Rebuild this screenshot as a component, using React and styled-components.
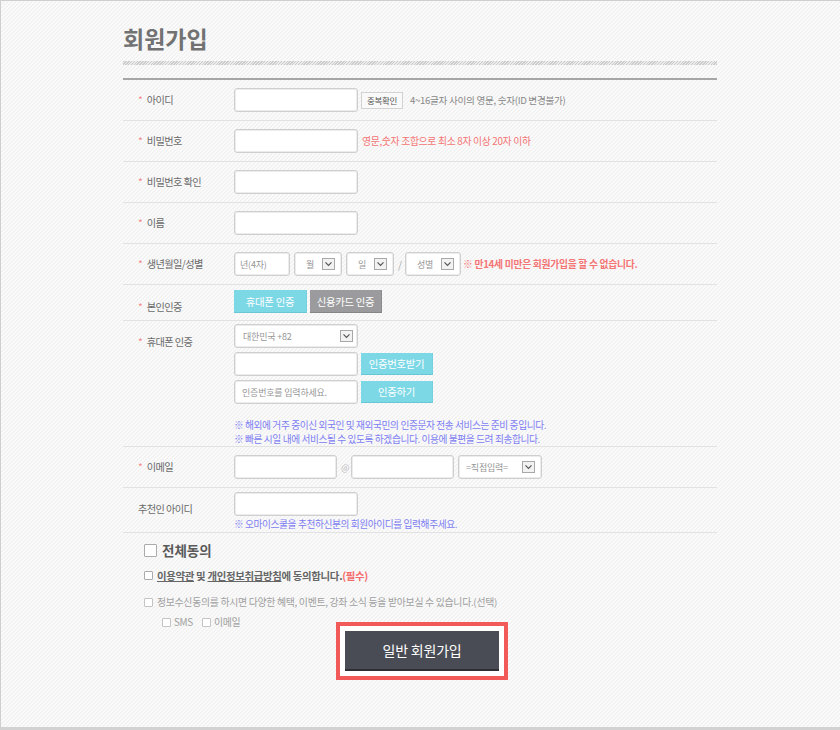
import React from "react";
import styled, { createGlobalStyle } from "styled-components";

const GlobalStyle = createGlobalStyle`
  body {
    margin: 0;
    font-family: "Noto Sans CJK KR", "Noto Sans", sans-serif;
  }
  * {
    box-sizing: border-box;
  }
`;

const Page = styled.div`
  width: 840px;
  height: 730px;
  border-top: 1px solid #cfcfcf;
  border-left: 1px solid #cfcfcf;
  border-bottom: 3px solid #d2d2d2;
  background-color: #f6f6f6;
  background-image: linear-gradient(
    135deg,
    #fbfbfb 25%,
    #f2f2f2 25%,
    #f2f2f2 50%,
    #fbfbfb 50%,
    #fbfbfb 75%,
    #f2f2f2 75%
  );
  background-size: 4px 4px;
  padding-left: 122px;
  overflow: hidden;
`;

const Wrap = styled.div`
  width: 594px;
`;

const Title = styled.h1`
  margin: 26px 0 0;
  font-size: 23px;
  line-height: 22px;
  font-weight: 700;
  color: #727272;
`;

const Hatch = styled.div`
  margin-top: 12px;
  height: 4px;
  background: repeating-linear-gradient(135deg, #cccccc 0 1px, #ebebeb 1px 2px);
`;

const Rule = styled.div`
  margin-top: 13px;
  height: 2px;
  background: #a6a6a6;
`;

const Row = styled.div`
  display: flex;
  align-items: flex-start;
  padding: ${(p) => p.$pad || "8px 0"};
  border-bottom: 1px solid #e2e2e2;
`;

const Label = styled.div`
  width: 111px;
  flex: none;
  padding: ${(p) => p.$top || 0}px 0 0 15px;
  margin-bottom: -${(p) => p.$top || 0}px;
  font-size: 10.2px;
  letter-spacing: -0.6px;
  line-height: 24px;
  color: #6a6a6a;
  white-space: nowrap;
`;

const Star = styled.span`
  color: #f28b8b;
  margin-right: 4px;
  letter-spacing: 0;
`;

const Field = styled.div`
  display: flex;
  flex-direction: column;
  gap: ${(p) => p.$gap ?? 4}px;
`;

const Line = styled.div`
  display: flex;
  align-items: center;
  gap: ${(p) => p.$gap ?? 4}px;
`;

const TextInput = styled.input`
  width: ${(p) => p.$w || 124}px;
  height: 24px;
  margin: 0;
  padding: 0 0 0 ${(p) => p.$pl ?? 7}px;
  border: 1px solid #cfcfcf;
  box-shadow: inset 0 0 0 1px #ececec;
  border-radius: 3px;
  background: #fff;
  font-family: "Noto Sans CJK KR", sans-serif;
  font-size: 9px;
  letter-spacing: -0.2px;
  color: #555;
  outline: none;
  &::placeholder {
    color: #959595;
  }
`;

const SelectBox = styled.div`
  width: ${(p) => p.$w}px;
  height: 24px;
  display: flex;
  align-items: center;
  justify-content: space-between;
  padding: 0 ${(p) => p.$pr ?? 6}px 0 ${(p) => p.$pl ?? 11}px;
  border: 1px solid #cfcfcf;
  box-shadow: inset 0 0 0 1px #ececec;
  border-radius: 3px;
  background: #fff;
  font-size: 9px;
  letter-spacing: -0.2px;
  color: #959595;
`;

const CheckBtn = styled.span`
  width: 42px;
  height: 17px;
  display: flex;
  align-items: center;
  justify-content: center;
  border: 1px solid #d2d2d2;
  background: #f9f9f9;
  font-size: 8.5px;
  letter-spacing: -0.3px;
  color: #555;
`;

const Hint = styled.span`
  margin-left: ${(p) => p.$ml || 0}px;
  font-size: 9.6px;
  letter-spacing: -0.3px;
  color: #888;
  white-space: nowrap;
`;

const Warn = styled.span`
  font-size: 9.8px;
  letter-spacing: -0.3px;
  color: #f47474;
  font-weight: ${(p) => (p.$bold ? 700 : 400)};
  margin-left: ${(p) => p.$ml || 0}px;
  white-space: nowrap;
`;

const Slash = styled.span`
  width: 3px;
  font-size: 10px;
  color: #aaa;
`;

const At = styled.span`
  width: 6px;
  font-size: 9px;
  color: #bbb;
  text-align: center;
`;

const ActionBtn = styled.span`
  width: ${(p) => p.$w}px;
  height: ${(p) => p.$h || 23}px;
  display: flex;
  align-items: center;
  justify-content: center;
  font-size: 10.4px;
  letter-spacing: -0.3px;
  color: #fff;
  white-space: nowrap;
  background: ${(p) => (p.$tone === "gray" ? "#9b9b9d" : "#7dd8e6")};
  border-bottom: 1px solid ${(p) => (p.$tone === "gray" ? "#858587" : "#69c6d4")};
  border-right: 1px solid ${(p) => (p.$tone === "gray" ? "#8c8c8e" : "#74d0de")};
`;

const Notice = styled.div`
  margin-top: ${(p) => p.$mt || 0}px;
  font-size: 9.7px;
  letter-spacing: -0.4px;
  line-height: ${(p) => p.$lh || 14}px;
  color: #7d7df2;
  white-space: nowrap;
`;

const Terms = styled.div`
  padding: 9px 0 0 21px;
`;

const TermRow = styled.div`
  display: flex;
  align-items: center;
  height: ${(p) => p.$h || 12}px;
  margin-top: ${(p) => p.$mt || 0}px;
  padding-left: ${(p) => p.$pl || 0}px;
  gap: ${(p) => p.$gap ?? 4}px;
`;

const Box = styled.span`
  width: ${(p) => p.$size}px;
  height: ${(p) => p.$size}px;
  flex: none;
  border: 1px solid ${(p) => (p.$light ? "#c4c4c4" : "#ababab")};
  border-radius: 1px;
  background: #fff;
`;

const AllText = styled.span`
  font-size: 13.5px;
  font-weight: 700;
  color: #5a5a5a;
  line-height: 16px;
`;

const ReqText = styled.span`
  font-size: 10.4px;
  font-weight: 700;
  letter-spacing: -0.3px;
  color: #666;
  white-space: nowrap;
`;

const Link = styled.span`
  text-decoration: underline;
`;

const Must = styled.span`
  color: #f46a6a;
`;

const OptText = styled.span`
  font-size: 9.9px;
  letter-spacing: -0.3px;
  color: #a0a0a0;
  white-space: nowrap;
  margin-right: ${(p) => p.$mr || 0}px;
`;

const Submit = styled.div`
  display: flex;
  justify-content: center;
  margin: -6px 0 0 4px;
`;

const RedFrame = styled.div`
  border: 4px solid #f25a5a;
  background: #fff;
  padding: 5px;
`;

const JoinBtn = styled.div`
  width: 154px;
  height: 40px;
  display: flex;
  align-items: center;
  justify-content: center;
  background: #4a4c55;
  border-bottom: 2px solid #2d2e34;
  color: #fff;
  font-size: 14px;
  letter-spacing: -0.2px;
`;

const Arrow = () => (
  <svg width="13" height="12" viewBox="0 0 13 12">
    <rect x="0.5" y="0.5" width="12" height="11" fill="#f2f2f2" stroke="#a8a8a8" />
    <path d="M3.5 4.3 L6.5 7.3 L9.5 4.3" fill="none" stroke="#555" strokeWidth="1.2" />
  </svg>
);

function Select({ w, pl, pr, children }) {
  return (
    <SelectBox $w={w} $pl={pl} $pr={pr}>
      <span>{children}</span>
      <Arrow />
    </SelectBox>
  );
}

function FieldLabel({ req = true, top, children }) {
  return (
    <Label $top={top}>
      {req && <Star>*</Star>}
      {children}
    </Label>
  );
}

export default function App() {
  return (
    <Page>
      <GlobalStyle />
      <Wrap>
        <Title>회원가입</Title>
        <Hatch />
        <Rule />

        <Row>
          <FieldLabel>아이디</FieldLabel>
          <Line $gap={3}>
            <TextInput />
            <CheckBtn>중복확인</CheckBtn>
            <Hint $ml={4}>4~16글자 사이의 영문, 숫자(ID 변경불가)</Hint>
          </Line>
        </Row>

        <Row>
          <FieldLabel>비밀번호</FieldLabel>
          <Line>
            <TextInput type="password" />
            <Warn>영문,숫자 조합으로 최소 8자 이상 20자 이하</Warn>
          </Line>
        </Row>

        <Row>
          <FieldLabel>비밀번호 확인</FieldLabel>
          <TextInput type="password" />
        </Row>

        <Row>
          <FieldLabel>이름</FieldLabel>
          <TextInput />
        </Row>

        <Row>
          <FieldLabel>생년월일/성별</FieldLabel>
          <Line>
            <TextInput $w={56} $pl={5} placeholder="년(4자)" />
            <Select w={48}>월</Select>
            <Select w={48}>일</Select>
            <Slash>/</Slash>
            <Select w={56}>성별</Select>
            <Warn $bold $ml={-2}>※ 만14세 미만은 회원가입을 할 수 없습니다.</Warn>
          </Line>
        </Row>

        <Row $pad="5px 0 6px">
          <FieldLabel top={5}>본인인증</FieldLabel>
          <Line $gap={3}>
            <ActionBtn $w={73}>휴대폰 인증</ActionBtn>
            <ActionBtn $w={72} $tone="gray">신용카드 인증</ActionBtn>
          </Line>
        </Row>

        <Row $pad="3px 0 0">
          <FieldLabel top={6}>휴대폰 인증</FieldLabel>
          <Field>
            <Select w={124} pl={8} pr={4}>대한민국 +82</Select>
            <Line $gap={3}>
              <TextInput />
              <ActionBtn $w={72} $h={22}>인증번호받기</ActionBtn>
            </Line>
            <Line $gap={3}>
              <TextInput placeholder="인증번호를 입력하세요." />
              <ActionBtn $w={72} $h={22}>인증하기</ActionBtn>
            </Line>
            <Notice $mt={10}>
              ※ 해외에 거주 중이신 외국인 및 재외국민의 인증문자 전송 서비스는 준비 중입니다.
              <br />
              ※ 빠른 시일 내에 서비스될 수 있도록 하겠습니다. 이용에 불편을 드려 죄송합니다.
            </Notice>
          </Field>
        </Row>

        <Row>
          <FieldLabel>이메일</FieldLabel>
          <Line>
            <TextInput $w={103} />
            <At>@</At>
            <TextInput $w={103} />
            <Select w={84} pl={7}>=직접입력=</Select>
          </Line>
        </Row>

        <Row $pad="4px 0 1px">
          <FieldLabel req={false} top={5}>추천인 아이디</FieldLabel>
          <Field $gap={2}>
            <TextInput />
            <Notice $lh={13}>※ 오마이스쿨을 추천하신분의 회원아이디를 입력해주세요.</Notice>
          </Field>
        </Row>

        <Terms>
          <TermRow $h={16} $gap={5}>
            <Box $size={13} />
            <AllText>전체동의</AllText>
          </TermRow>
          <TermRow $mt={11}>
            <Box $size={9} />
            <ReqText>
              <Link>이용약관</Link> 및 <Link>개인정보취급방침</Link>에 동의합니다.<Must>(필수)</Must>
            </ReqText>
          </TermRow>
          <TermRow $mt={15}>
            <Box $size={9} $light />
            <OptText>정보수신동의를 하시면 다양한 혜택, 이벤트, 강좌 소식 등을 받아보실 수 있습니다.(선택)</OptText>
          </TermRow>
          <TermRow $mt={8} $pl={18} $gap={3}>
            <Box $size={9} $light />
            <OptText $mr={6}>SMS</OptText>
            <Box $size={9} $light />
            <OptText>이메일</OptText>
          </TermRow>
        </Terms>

        <Submit>
          <RedFrame>
            <JoinBtn>일반 회원가입</JoinBtn>
          </RedFrame>
        </Submit>
      </Wrap>
    </Page>
  );
}
